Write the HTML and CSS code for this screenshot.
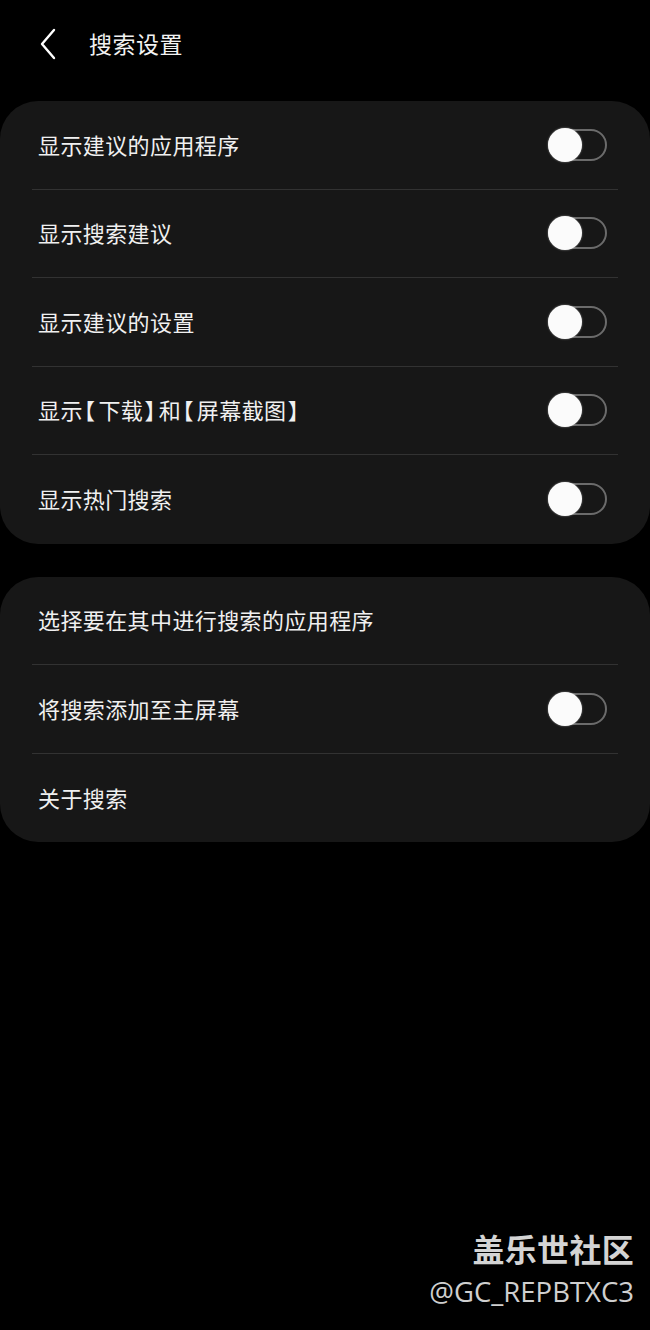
FILE: index.html
```html
<!DOCTYPE html>
<html lang="zh">
<head>
<meta charset="utf-8">
<link rel="stylesheet" href="styles.css">
</head>
<body>
<div class="screen">
  <header class="topbar">
    <svg class="back" width="24" height="34" viewBox="0 0 24 34"><polyline points="15,3 3,17 15,31" fill="none" stroke="#fff" stroke-width="2.4" stroke-linecap="round" stroke-linejoin="round"/></svg>
    <h1 class="title">搜索设置</h1>
  </header>

  <section class="card">
    <div class="row"><span class="label">显示建议的应用程序</span><span class="toggle"><span class="knob"></span></span></div>
    <div class="row"><span class="label">显示搜索建议</span><span class="toggle"><span class="knob"></span></span></div>
    <div class="row"><span class="label">显示建议的设置</span><span class="toggle"><span class="knob"></span></span></div>
    <div class="row"><span class="label">显示<span class="bk">【</span>下载<span class="bk">】</span>和<span class="bk">【</span>屏幕截图<span class="bk">】</span></span><span class="toggle"><span class="knob"></span></span></div>
    <div class="row"><span class="label">显示热门搜索</span><span class="toggle"><span class="knob"></span></span></div>
  </section>

  <section class="card">
    <div class="row"><span class="label">选择要在其中进行搜索的应用程序</span></div>
    <div class="row"><span class="label">将搜索添加至主屏幕</span><span class="toggle"><span class="knob"></span></span></div>
    <div class="row"><span class="label">关于搜索</span></div>
  </section>

  <div class="watermark">
    <div class="wm-name">盖乐世社区</div>
    <div class="wm-id">@GC_REPBTXC3</div>
  </div>
</div>
</body>
</html>
```

FILE: styles.css
```css
html, body {
  margin: 0;
  padding: 0;
  background: #000;
}
body {
  font-family: "Noto Sans CJK SC", "Noto Sans", sans-serif;
  color: #f2f2f2;
}
.screen {
  width: 650px;
  height: 1330px;
  position: relative;
  overflow: hidden;
  background: #000;
}
.topbar {
  height: 90px;
  display: flex;
  align-items: center;
  padding-left: 39px;
  box-sizing: border-box;
}
.back {
  display: block;
  margin-top: -2px;
}
.title {
  margin: -3px 0 0 26px;
  font-size: 23px;
  font-weight: 400;
  color: #f2f2f2;
  letter-spacing: 0.5px;
  line-height: 1;
}
.card {
  background: #171717;
  border-radius: 38px;
  margin-top: 11px;
  padding: 0 32px;
}
.card + .card {
  margin-top: 33px;
}
.row {
  height: 88.5px;
  display: flex;
  align-items: center;
  justify-content: space-between;
  border-bottom: 1.5px solid #323232;
  box-sizing: border-box;
}
.row:last-child {
  border-bottom: none;
}
.label {
  font-size: 22px;
  padding-left: 6px;
  color: #f0f0f0;
  letter-spacing: 0.4px;
  margin-top: -2px;
}
.bk {
  font-feature-settings: "halt";
  letter-spacing: 2px;
  padding: 0 1.3px;
}
.toggle {
  position: relative;
  width: 59px;
  height: 32px;
  margin-right: 11px;
  box-sizing: border-box;
  border: 2px solid #6b6b6b;
  border-radius: 16px;
}
.knob {
  position: absolute;
  left: -2px;
  top: -3px;
  width: 34px;
  height: 34px;
  border-radius: 50%;
  background: #fbfbfb;
  box-shadow: 0 0 2px rgba(255,255,255,0.5);
}
.watermark {
  position: absolute;
  right: 16px;
  bottom: 22px;
  text-align: right;
}
.wm-name {
  font-size: 32px;
  font-weight: 700;
  color: #d4d4d4;
  line-height: 1.1;
  letter-spacing: 0.3px;
}
.wm-id {
  font-family: "Open Sans", "Noto Sans", sans-serif;
  font-size: 27.5px;
  color: #cfcfcf;
  line-height: 1.2;
  margin-top: 9px;
}
```
